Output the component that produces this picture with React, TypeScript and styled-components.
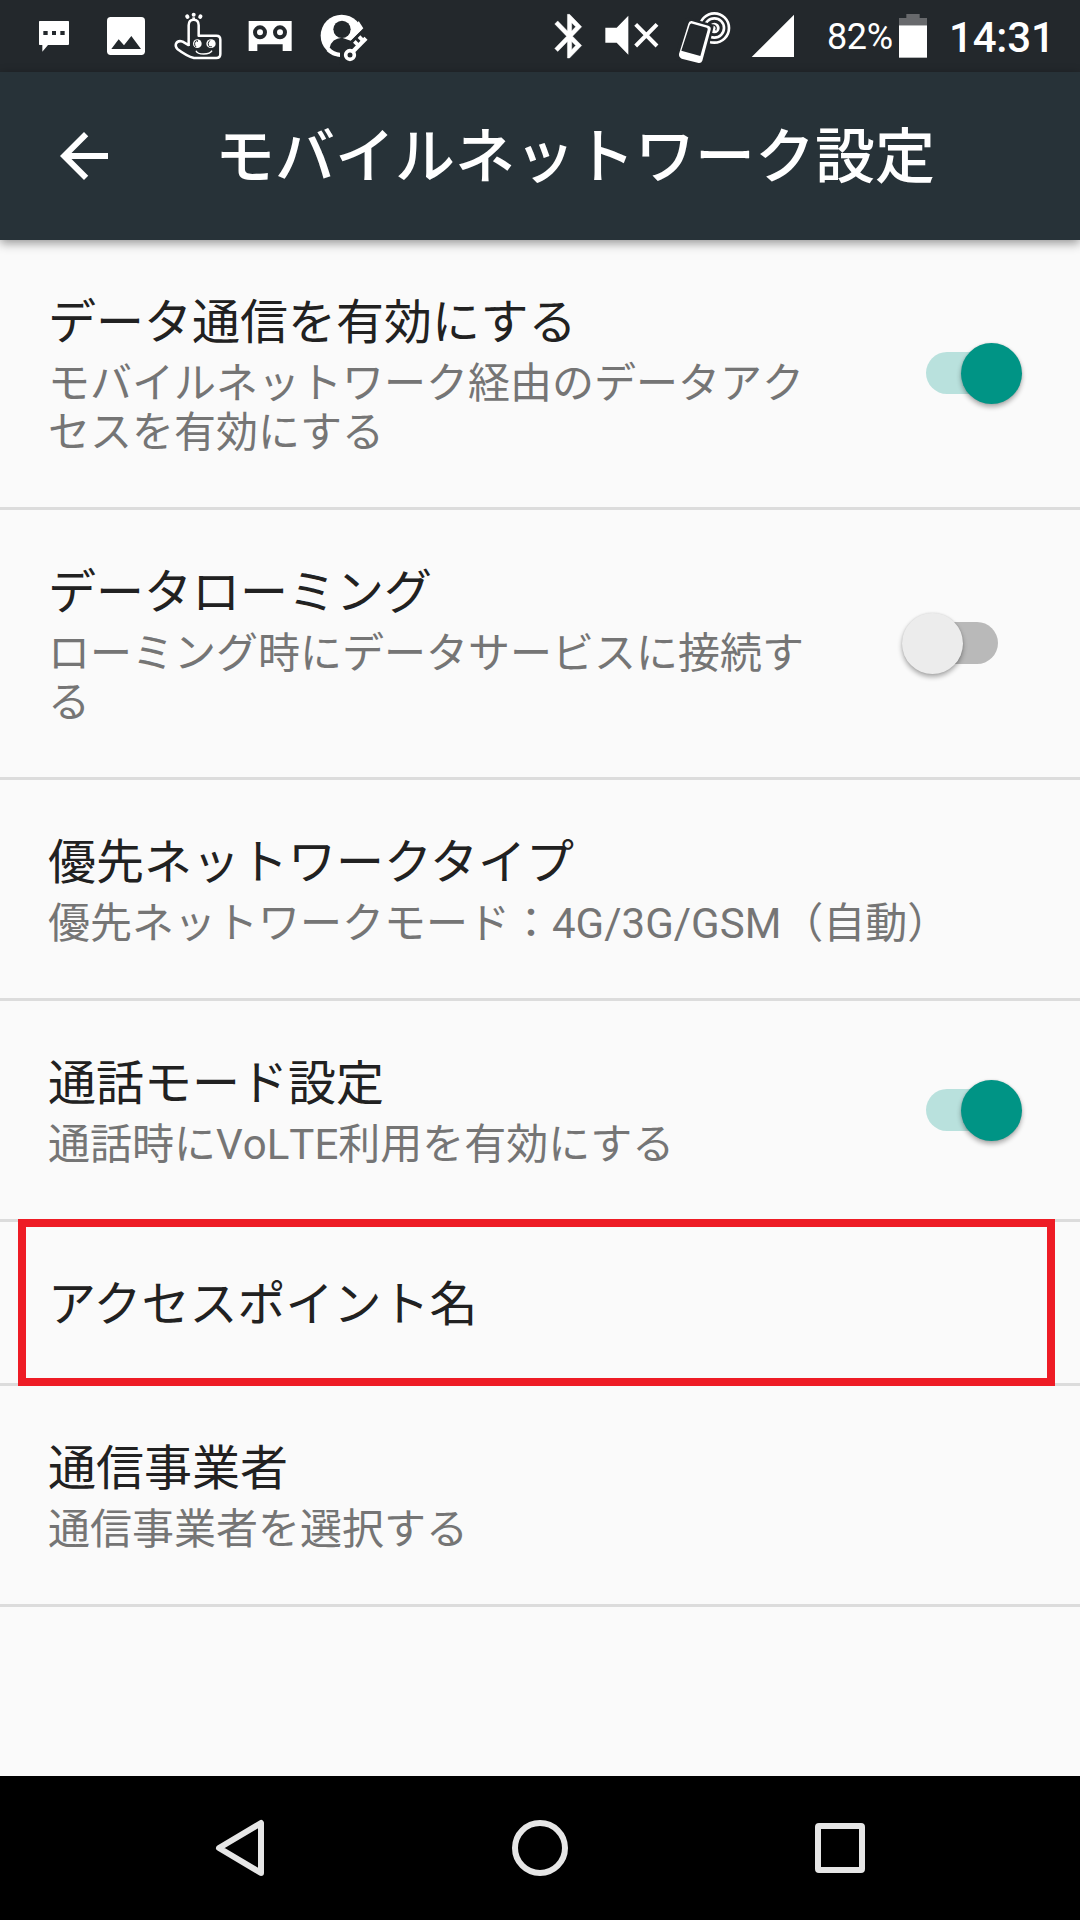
import React from 'react';
import styled, { createGlobalStyle } from 'styled-components';

const STATUS_BG = '#23282c';

const GlobalStyle = createGlobalStyle`
  * { box-sizing: border-box; }
  body { margin: 0; background: #fafafa; }
`;

const Screen = styled.div`
  width: 1080px;
  height: 1920px;
  display: flex;
  flex-direction: column;
  overflow: hidden;
  background: #fafafa;
  font-family: Roboto, 'Noto Sans CJK JP', sans-serif;
`;

const StatusBar = styled.header`
  height: 72px;
  flex: none;
  display: flex;
  justify-content: space-between;
  padding: 0 28px 0 18px;
  background: ${STATUS_BG};
  color: #fff;
`;

const StatusGroup = styled.div`
  display: flex;
  height: 72px;
`;

const BatteryText = styled.span`
  width: 72px;
  font-size: 36px;
  line-height: 42px;
  margin-top: 16px;
  margin-left: 27px;
  letter-spacing: -0.4px;
  white-space: nowrap;
`;

const Clock = styled.span`
  width: 103px;
  margin-left: 22px;
  margin-top: 13px;
  font-size: 42px;
  font-weight: 500;
  line-height: 50px;
  letter-spacing: -0.2px;
  white-space: nowrap;
`;

const AppBar = styled.div`
  height: 168px;
  flex: none;
  display: flex;
  align-items: center;
  gap: 95px;
  padding-left: 48px;
  background: #273238;
  color: #fff;
  box-shadow: 0 3px 10px rgba(0, 0, 0, 0.42);
  z-index: 1;
`;

const AppTitle = styled.h1`
  margin: 4px 0 0;
  font-size: 60px;
  font-weight: 500;
  line-height: 80px;
  white-space: nowrap;
`;

const List = styled.main`
  flex: 1;
  display: flex;
  flex-direction: column;
`;

const Row = styled.section<{ $height: number }>`
  position: relative;
  flex: none;
  display: flex;
  justify-content: space-between;
  align-items: center;
  height: ${p => p.$height}px;
  padding: 0 58px 0 48px;
  border-bottom: 3px solid #dcdcdc;
`;

const RowText = styled.div<{ $wide: boolean }>`
  align-self: flex-start;
  width: ${p => (p.$wide ? '960px' : '780px')};
  padding-top: 51px;
`;

const RowTitle = styled.div`
  font-size: 48px;
  line-height: 64px;
  color: #212121;
`;

const RowSummary = styled.div`
  margin-top: 4px;
  font-size: 42px;
  line-height: 49px;
  color: #757575;
  font-kerning: none;
  word-break: break-all;
`;

const Highlight = styled.div`
  position: absolute;
  top: -3px;
  bottom: -3px;
  left: 18px;
  right: 25px;
  border: 8px solid #ee1c25;
  z-index: 1;
`;

const Track = styled.div<{ $on: boolean }>`
  position: relative;
  width: 72px;
  height: 42px;
  margin-right: 24px;
  margin-bottom: 1px;
  border-radius: 21px;
  background: ${p => (p.$on ? '#b9e1dd' : '#b9b9b9')};
`;

const Thumb = styled.div<{ $on: boolean }>`
  position: absolute;
  top: -9px;
  left: ${p => (p.$on ? '35px' : '-24px')};
  width: 61px;
  height: 61px;
  border-radius: 50%;
  background: ${p => (p.$on ? '#009485' : '#ececec')};
  box-shadow: 0 3px 5px rgba(0, 0, 0, 0.32), 0 0 2px rgba(0, 0, 0, 0.12);
`;

const NavBar = styled.nav`
  height: 144px;
  flex: none;
  display: flex;
  justify-content: center;
  align-items: center;
  gap: 228px;
  background: #000;
`;

/* Status glyphs are drawn on a grid of three units per pixel. */
function Glyph({ x, w, children }: { x: number; w: number; children: React.ReactNode }) {
  return (
    <svg width={w / 3} height={72} viewBox={`${x} 0 ${w} 216`} fill="#fff">
      {children}
    </svg>
  );
}

const MessageIcon = () => (
  <Glyph x={-6} w={216}>
    <path d="M59 63h86q2 0 2 2v67q0 3-3 3H84l-17 20v-20h-8q-2 0-2-2V65q0-2 2-2z" />
    <path fill={STATUS_BG} d="M70 93h13v12H70zM96 93h12v12H96zM121 93h13v12h-13z" />
  </Glyph>
);

const ImageIcon = () => (
  <Glyph x={210} w={216}>
    <rect x="261" y="51" width="114" height="114" rx="11" />
    <path fill={STATUS_BG} d="M274 147l22-29 16 18 22-28 29 39z" />
  </Glyph>
);

const HandIcon = () => (
  <Glyph x={426} w={216}>
    <g fill="none" stroke="#fff" strokeWidth="7.5" strokeLinejoin="round">
      <path d="M506 138V76q0-17 15-17t15 17v31h53q12 0 12 12v43q0 12-12 12h-67q-21-5-50-27-7-8-4-16 6-11 20-6l19 11" />
      <path strokeWidth="4" d="M528 152q4 10 23 10 20 0 25-10" />
    </g>
    <ellipse cx="502" cy="50" rx="6" ry="7" transform="rotate(-35 502 50)" />
    <ellipse cx="521" cy="44" rx="6" ry="6" />
    <ellipse cx="541" cy="50" rx="6" ry="7" transform="rotate(35 541 50)" />
    <path d="M517 52h8v8h-8z" />
    <ellipse cx="532" cy="131" rx="13" ry="13" />
    <ellipse cx="573" cy="131" rx="14" ry="13" />
    <path fill="none" stroke={STATUS_BG} strokeWidth="3" d="M529 121q-10 10-1 20M570 121q-10 10-1 20" />
    <path fill={STATUS_BG} d="M530 121h4v4h-4zM571 138h4v4h-4z" />
  </Glyph>
);

const CassetteIcon = () => (
  <Glyph x={642} w={216}>
    <path d="M686 63h129v90h-27v-20h-76v20h-26z" />
    <g fill="none" stroke={STATUS_BG} strokeWidth="12">
      <circle cx="720" cy="97" r="15" />
      <circle cx="780" cy="97" r="15" />
    </g>
  </Glyph>
);

const AccountKeyIcon = () => (
  <Glyph x={858} w={216}>
    <circle cx="965" cy="107" r="63" />
    <circle cx="966" cy="88" r="26" fill={STATUS_BG} />
    <path fill={STATUS_BG} d="M929 143q6-28 37-30l26 9 37-37 14 20-42 90h-42v-24q-18-8-30-28z" />
    <path d="M929 143q13 13 31 15v13q-24-2-40-18z" />
    <path d="M992 121l38-36-14-22-28 46z" />
    <circle cx="990" cy="165" r="13" fill={STATUS_BG} stroke="#fff" strokeWidth="11" />
    <path fill="none" stroke="#fff" strokeWidth="13" d="M998 155l40-40" />
    <path fill="none" stroke="#fff" strokeWidth="11" d="M1031 124l-14-14M1017 138l-14-14" />
  </Glyph>
);

const BluetoothIcon = () => (
  <Glyph x={0} w={159}>
    <path
      stroke="#fff"
      strokeWidth="0.2"
      transform="translate(12.5 30) scale(6.35 6.55)"
      d="M17.71 7.71L12 2h-1v7.59L6.41 5 5 6.41 10.59 12 5 17.59 6.41 19 11 14.41V22h1l5.71-5.71-4.3-4.29 4.3-4.29zM13 5.83l1.88 1.88L13 9.59V5.83zm1.88 10.46L13 18.17v-3.76l1.88 1.88z"
    />
  </Glyph>
);

const MuteIcon = () => (
  <Glyph x={159} w={225}>
    <path d="M196 83h34l35-36v117l-35-36h-34z" />
    <path fill="none" stroke="#fff" strokeWidth="12" d="M287 73l64 65M351 73l-64 65" />
  </Glyph>
);

const NfcIcon = () => (
  <Glyph x={384} w={216}>
    <g fill="none" stroke="#fff" strokeWidth="8">
      <circle cx="523" cy="84" r="44" />
      <circle cx="523" cy="84" r="29" />
    </g>
    <circle cx="523" cy="84" r="16" />
    <path fill="none" stroke={STATUS_BG} strokeWidth="4" d="M512 79q8-8 15 0 4 5 0 12" />
    <path fill={STATUS_BG} d="M449 54l65 18q9 3 6 11l-26 114-90-18 28-116q6-12 17-9z" />
    <path d="M455 63l50 14q9 3 7 12l-25 93q-3 8-11 7l-51-13q-9-4-8-14l28-91q2-9 10-8z" />
    <path fill={STATUS_BG} d="M457 71l43 12q4 2 3 6l-22 79-57-16 25-77q2-6 8-4z" />
  </Glyph>
);

const SignalIcon = () => (
  <Glyph x={600} w={180}>
    <path d="M762 44v127H635z" />
  </Glyph>
);

const BatteryIcon = () => (
  <Glyph x={297} w={84}>
    <path fill="#67696c" d="M319 42h40v12h22v22h-84V54h22z" />
    <path d="M297 76h84v97h-84z" />
  </Glyph>
);

function Switch({ on }: { on: boolean }) {
  return (
    <Track $on={on} role="switch" aria-checked={on}>
      <Thumb $on={on} />
    </Track>
  );
}

type Setting = {
  title: string;
  summary?: string;
  height: number;
  on?: boolean;
  highlighted?: boolean;
};

const settings: Setting[] = [
  {
    title: 'データ通信を有効にする',
    summary: 'モバイルネットワーク経由のデータアクセスを有効にする',
    height: 270,
    on: true,
  },
  {
    title: 'データローミング',
    summary: 'ローミング時にデータサービスに接続する',
    height: 270,
    on: false,
  },
  {
    title: '優先ネットワークタイプ',
    summary: '優先ネットワークモード：4G/3G/GSM（自動）',
    height: 221,
  },
  { title: '通話モード設定', summary: '通話時にVoLTE利用を有効にする', height: 221, on: true },
  { title: 'アクセスポイント名', height: 164, highlighted: true },
  { title: '通信事業者', summary: '通信事業者を選択する', height: 221 },
];

export default function App() {
  return (
    <Screen lang="ja">
      <GlobalStyle />
      <StatusBar>
        <StatusGroup>
          <MessageIcon />
          <ImageIcon />
          <HandIcon />
          <CassetteIcon />
          <AccountKeyIcon />
        </StatusGroup>
        <StatusGroup>
          <BluetoothIcon />
          <MuteIcon />
          <NfcIcon />
          <SignalIcon />
          <BatteryText>82%</BatteryText>
          <BatteryIcon />
          <Clock>14:31</Clock>
        </StatusGroup>
      </StatusBar>
      <AppBar>
        <svg width="72" height="72" viewBox="0 0 24 24" fill="#fff">
          <path d="M20 11H7.83l5.59-5.59L12 4l-8 8 8 8 1.41-1.41L7.83 13H20v-2z" />
        </svg>
        <AppTitle>モバイルネットワーク設定</AppTitle>
      </AppBar>
      <List>
        {settings.map(s => (
          <Row key={s.title} $height={s.height}>
            <RowText $wide={s.on === undefined}>
              <RowTitle>{s.title}</RowTitle>
              {s.summary && <RowSummary>{s.summary}</RowSummary>}
            </RowText>
            {s.on !== undefined && <Switch on={s.on} />}
            {s.highlighted && <Highlight />}
          </Row>
        ))}
      </List>
      <NavBar>
        <svg width="72" height="72" viewBox="0 0 72 72" fill="none" stroke="#e6e6e6" strokeWidth="6">
          <path strokeLinejoin="round" d="M15 36L57 11v50z" />
        </svg>
        <svg width="72" height="72" viewBox="0 0 72 72" fill="none" stroke="#e6e6e6" strokeWidth="6">
          <circle cx="36" cy="36" r="25" />
        </svg>
        <svg width="72" height="72" viewBox="0 0 72 72" fill="none" stroke="#e6e6e6" strokeWidth="6">
          <rect x="14" y="14" width="44" height="44" rx="1" />
        </svg>
      </NavBar>
    </Screen>
  );
}
